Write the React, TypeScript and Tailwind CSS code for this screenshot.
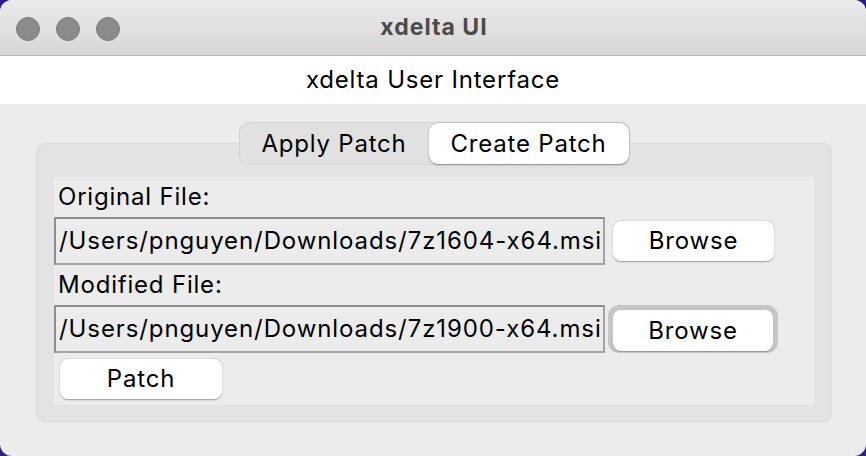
import React from "react";

const font = { fontFamily: "Inter, 'Open Sans', 'Liberation Sans', sans-serif" };

function Browse({ focused }: { focused?: boolean }) {
  if (focused) {
    return (
      <div className="ml-[3px] rounded-[11px] bg-[#c6c6c6] p-[5px] pb-[2px]">
        <div className="flex h-[41px] w-[160px] items-center justify-center rounded-[8px] bg-white text-[24px] text-black shadow-[0_1px_1px_rgba(0,0,0,0.25)]">
          Browse
        </div>
      </div>
    );
  }
  return (
    <div className="ml-[8px] flex h-[40px] w-[161px] items-center justify-center rounded-[8px] bg-white text-[24px] text-black shadow-[0_0.5px_1.5px_rgba(0,0,0,0.35)]">
      Browse
    </div>
  );
}

function PathEntry({ value }: { value: string }) {
  return (
    <div className="flex h-[48px] w-[551px] shrink-0 items-center overflow-hidden whitespace-nowrap border-2 border-[#a3a3a3] border-l-[#8d8d8d] border-t-[#8d8d8d] bg-[#ececec] pl-[3px] text-[24px] tracking-[0.9px] text-black">
      {value}
    </div>
  );
}

export default function App() {
  return (
    <div className="h-[456px] w-[866px] bg-[#2d1d86] tracking-[0.8px]" style={font}>
      <div className="flex h-full w-full flex-col overflow-hidden rounded-[12px] bg-[#ececec]">
        <div className="relative flex h-[56px] shrink-0 items-center justify-center border-b border-[#b8b8b8] bg-gradient-to-b from-[#ebebeb] to-[#d6d6d6]">
          <div className="absolute left-[16px] top-[17px] flex gap-[16px]">
            <div className="h-[24px] w-[24px] rounded-full border border-[#7c7c7c] bg-[#8b8b8b]" />
            <div className="h-[24px] w-[24px] rounded-full border border-[#7c7c7c] bg-[#8b8b8b]" />
            <div className="h-[24px] w-[24px] rounded-full border border-[#7c7c7c] bg-[#8b8b8b]" />
          </div>
          <span className="pl-[2px] text-[23px] font-bold tracking-[1px] text-[#4b4b4b]">xdelta UI</span>
        </div>

        <div className="flex h-[48px] shrink-0 items-center justify-center bg-white text-[24px] text-black">
          xdelta User Interface
        </div>

        <div className="flex flex-col pl-[36px] pr-[34px] pt-[18px]">
          <div className="relative z-10 flex justify-center">
            <div className="flex h-[43px] items-center rounded-[10px] border border-[#d2d2d2] bg-[#e1e1e1] text-[24px] text-black">
              <div className="flex h-full w-[189px] items-center justify-center">Apply Patch</div>
              <div className="flex h-[41px] w-[200px] items-center justify-center rounded-[9px] bg-white shadow-[0_0.5px_2px_rgba(0,0,0,0.35)]">
                Create Patch
              </div>
            </div>
          </div>

          <div className="-mt-[22px] h-[279px] rounded-[8px] border border-[#dcdcdc] bg-[#e3e3e3] px-[17px] pb-[16px] pt-[33px]">
            <div className="flex h-full flex-col bg-[#ececec] text-[24px] text-black">
              <div className="flex h-[40px] items-center pl-[4px]">Original File:</div>
              <div className="flex items-center">
                <PathEntry value="/Users/pnguyen/Downloads/7z1604-x64.msi" />
                <Browse />
              </div>
              <div className="flex h-[40px] items-center pl-[4px]">Modified File:</div>
              <div className="flex items-center">
                <PathEntry value="/Users/pnguyen/Downloads/7z1900-x64.msi" />
                <Browse focused />
              </div>
              <div className="pl-[6px] pt-[6px]">
                <div className="flex h-[40px] w-[162px] items-center justify-center rounded-[8px] bg-white shadow-[0_0.5px_1.5px_rgba(0,0,0,0.35)]">
                  Patch
                </div>
              </div>
            </div>
          </div>
        </div>
      </div>
    </div>
  );
}
